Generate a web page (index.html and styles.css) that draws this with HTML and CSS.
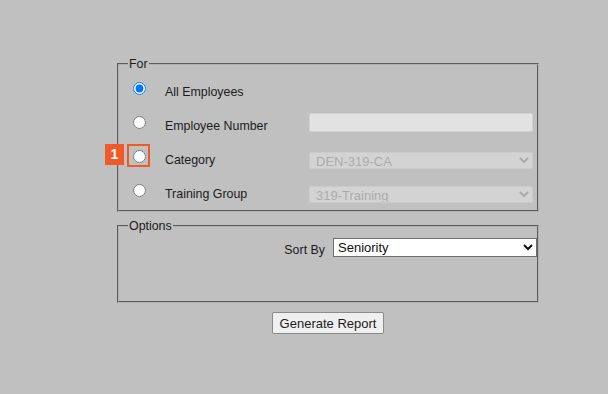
FILE: index.html
```html
<!DOCTYPE html>
<html>
<head>
<meta charset="utf-8">
<link rel="stylesheet" href="styles.css">
</head>
<body>
<div class="wrap">
  <fieldset class="box box-for">
    <legend>For</legend>
    <div class="row">
      <span class="radio-cell"><input type="radio" name="for" checked></span>
      <label class="lbl">All Employees</label>
    </div>
    <div class="row">
      <span class="radio-cell"><input type="radio" name="for"></span>
      <label class="lbl">Employee Number</label>
      <input type="text" class="ctl ctl-text" disabled>
    </div>
    <div class="row">
      <span class="radio-cell marked">
        <input type="radio" name="for">
        <span class="hl"></span>
        <span class="badge">1</span>
      </span>
      <label class="lbl">Category</label>
      <select class="ctl ctl-sel" disabled><option>DEN-319-CA</option></select>
    </div>
    <div class="row">
      <span class="radio-cell"><input type="radio" name="for"></span>
      <label class="lbl">Training Group</label>
      <select class="ctl ctl-sel" disabled><option>319-Training</option></select>
    </div>
  </fieldset>
  <fieldset class="box box-opt">
    <legend>Options</legend>
    <div class="sort">
      <label class="lbl">Sort By</label>
      <select class="sort-sel"><option>Seniority</option></select>
    </div>
  </fieldset>
  <div class="actions">
    <button class="btn" type="button">Generate Report</button>
  </div>
</div>
</body>
</html>
```
FILE: styles.css
```css
html, body {
  margin: 0;
  padding: 0;
  background: #c0c0c0;
}
body {
  font-family: "Liberation Sans", Arial, sans-serif;
  color: #1c1c1c;
}
.wrap {
  margin-left: 117px;
  width: 422px;
  padding-top: 57px;
}
.box {
  margin: 0;
  padding: 0 4px 3px 14px;
  border: 2px groove #b0b0b0;
  min-width: 0;
}
.box legend {
  font-size: 12.4px;
  line-height: 14px;
  padding: 0 1px;
  margin-left: -5px;
  color: #1c1c1c;
}
.row {
  display: flex;
  align-items: center;
  height: 34px;
}
.radio-cell {
  position: relative;
  width: 13px;
  height: 13px;
  flex: none;
}
.radio-cell input {
  display: block;
  margin: 0;
  width: 13px;
  height: 13px;
}
.lbl {
  font-size: 12.4px;
  color: #1c1c1c;
}
.row .lbl {
  margin-left: 19px;
  margin-top: 7px;
  flex: 1;
}
.ctl {
  box-sizing: border-box;
  width: 224px;
  font-family: "Liberation Sans", Arial, sans-serif;
  font-size: 13px;
  margin: 0;
}
.ctl-text {
  height: 19px;
  background: #e2e2e2;
  border: 1px solid #d2d2d2;
  border-radius: 2px;
}
.ctl-sel {
  height: 17px;
  margin-top: 8px;
  padding: 0 2px;
  background: #dcdcdc;
  color: #a3a3a3;
  border: 1px solid #d0d0d0;
  border-radius: 2px;
}
.hl {
  position: absolute;
  left: -6px;
  top: -6px;
  width: 19px;
  height: 19px;
  border: 2px solid #f0592a;
}
.badge {
  position: absolute;
  left: -28px;
  top: -6px;
  width: 19px;
  height: 21px;
  background: #f0592a;
  color: #fff;
  font-weight: bold;
  font-size: 14px;
  line-height: 21px;
  text-align: center;
}
.box-opt {
  margin-top: 7px;
  padding: 0 0 0 14px;
  height: 80px;
  box-sizing: content-box;
}
.sort {
  display: flex;
  justify-content: flex-end;
  align-items: center;
  gap: 8px;
  padding-top: 5px;
}
.sort .lbl {
  margin-top: 4px;
}
.sort-sel {
  box-sizing: border-box;
  width: 204px;
  height: 19px;
  margin: 0;
  font-family: "Liberation Sans", Arial, sans-serif;
  font-size: 13px;
  color: #111;
  background: #fff;
  border: 1px solid #6f6f6f;
  border-radius: 0;
}
.actions {
  display: flex;
  justify-content: center;
  margin-top: 9px;
}
.btn {
  box-sizing: border-box;
  height: 22px;
  width: 112px;
  padding: 0 6px;
  font-family: "Liberation Sans", Arial, sans-serif;
  font-size: 13px;
  color: #1c1c1c;
  background: #efefef;
  border: 1px solid #8a8a8a;
  border-radius: 2px;
}
```
